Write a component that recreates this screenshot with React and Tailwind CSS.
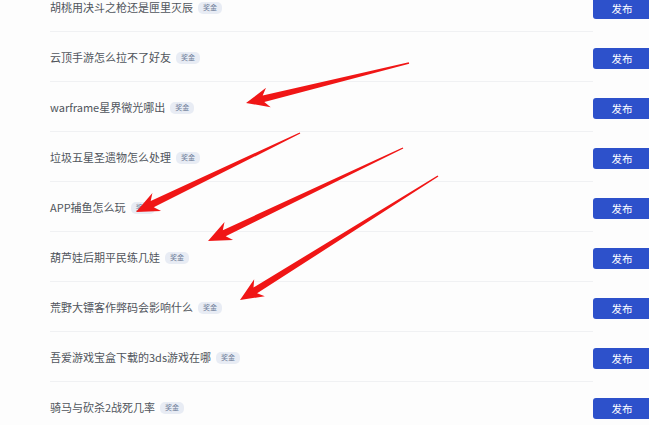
import React from "react";

const rows = [
  "胡桃用决斗之枪还是匣里灭辰",
  "云顶手游怎么拉不了好友",
  "warframe星界微光哪出",
  "垃圾五星圣遗物怎么处理",
  "APP捕鱼怎么玩",
  "葫芦娃后期平民练几娃",
  "荒野大镖客作弊码会影响什么",
  "吾爱游戏宝盒下载的3ds游戏在哪",
  "骑马与砍杀2战死几率",
];

const arrows = [
  [409, 63, 246, 103],
  [300, 133, 136, 212],
  [403, 148, 208, 241],
  [438, 176, 240, 300],
];

function arrowPoints([tx, ty, px, py]) {
  const dx = px - tx;
  const dy = py - ty;
  const len = Math.hypot(dx, dy);
  const ux = dx / len;
  const uy = dy / len;
  const nx = -uy;
  const ny = ux;
  const L = 23;
  const hw = 10;
  const sw = 3.4;
  const back = 5;
  const bx = px - ux * L;
  const by = py - uy * L;
  const ix = px - ux * (L - back);
  const iy = py - uy * (L - back);
  const pts = [
    [tx + nx * 0.7, ty + ny * 0.7],
    [ix + nx * sw, iy + ny * sw],
    [bx + nx * hw, by + ny * hw],
    [px, py],
    [bx - nx * hw, by - ny * hw],
    [ix - nx * sw, iy - ny * sw],
    [tx - nx * 0.7, ty - ny * 0.7],
  ];
  return pts.map((p) => p[0].toFixed(1) + "," + p[1].toFixed(1)).join(" ");
}

export default function App() {
  return (
    <div
      className="relative w-[649px] h-[425px] overflow-hidden bg-[#fdfdfd]"
      style={{ fontFamily: '"Noto Sans CJK SC", "Noto Sans", sans-serif' }}
    >
      <div className="mt-[-18px] flex flex-col">
        {rows.map((t, i) => (
          <div key={i} className="flex h-[50px] items-center">
            <div className="ml-[50px] flex h-full w-[543px] shrink-0 items-center border-b border-[#f0f1f3] pt-[2px]">
              <span className="text-[11px] leading-none text-[#50555c]">{t}</span>
              <span className="ml-[5px] rounded-[5px] bg-[#e8ecf4] px-[5px] py-[2.5px] text-[7px] leading-none text-[#6e7c98]">
                奖金
              </span>
            </div>
            <div className="mt-[3px] flex h-[21px] w-[58px] shrink-0 items-center justify-center rounded-[3px] bg-[#2d51cb] text-[10.5px] text-white">
              发布
            </div>
          </div>
        ))}
      </div>
      <svg className="absolute left-0 top-0" width="649" height="425" viewBox="0 0 649 425">
        {arrows.map((a, i) => (
          <polygon key={i} points={arrowPoints(a)} fill="#f01616" />
        ))}
      </svg>
    </div>
  );
}
